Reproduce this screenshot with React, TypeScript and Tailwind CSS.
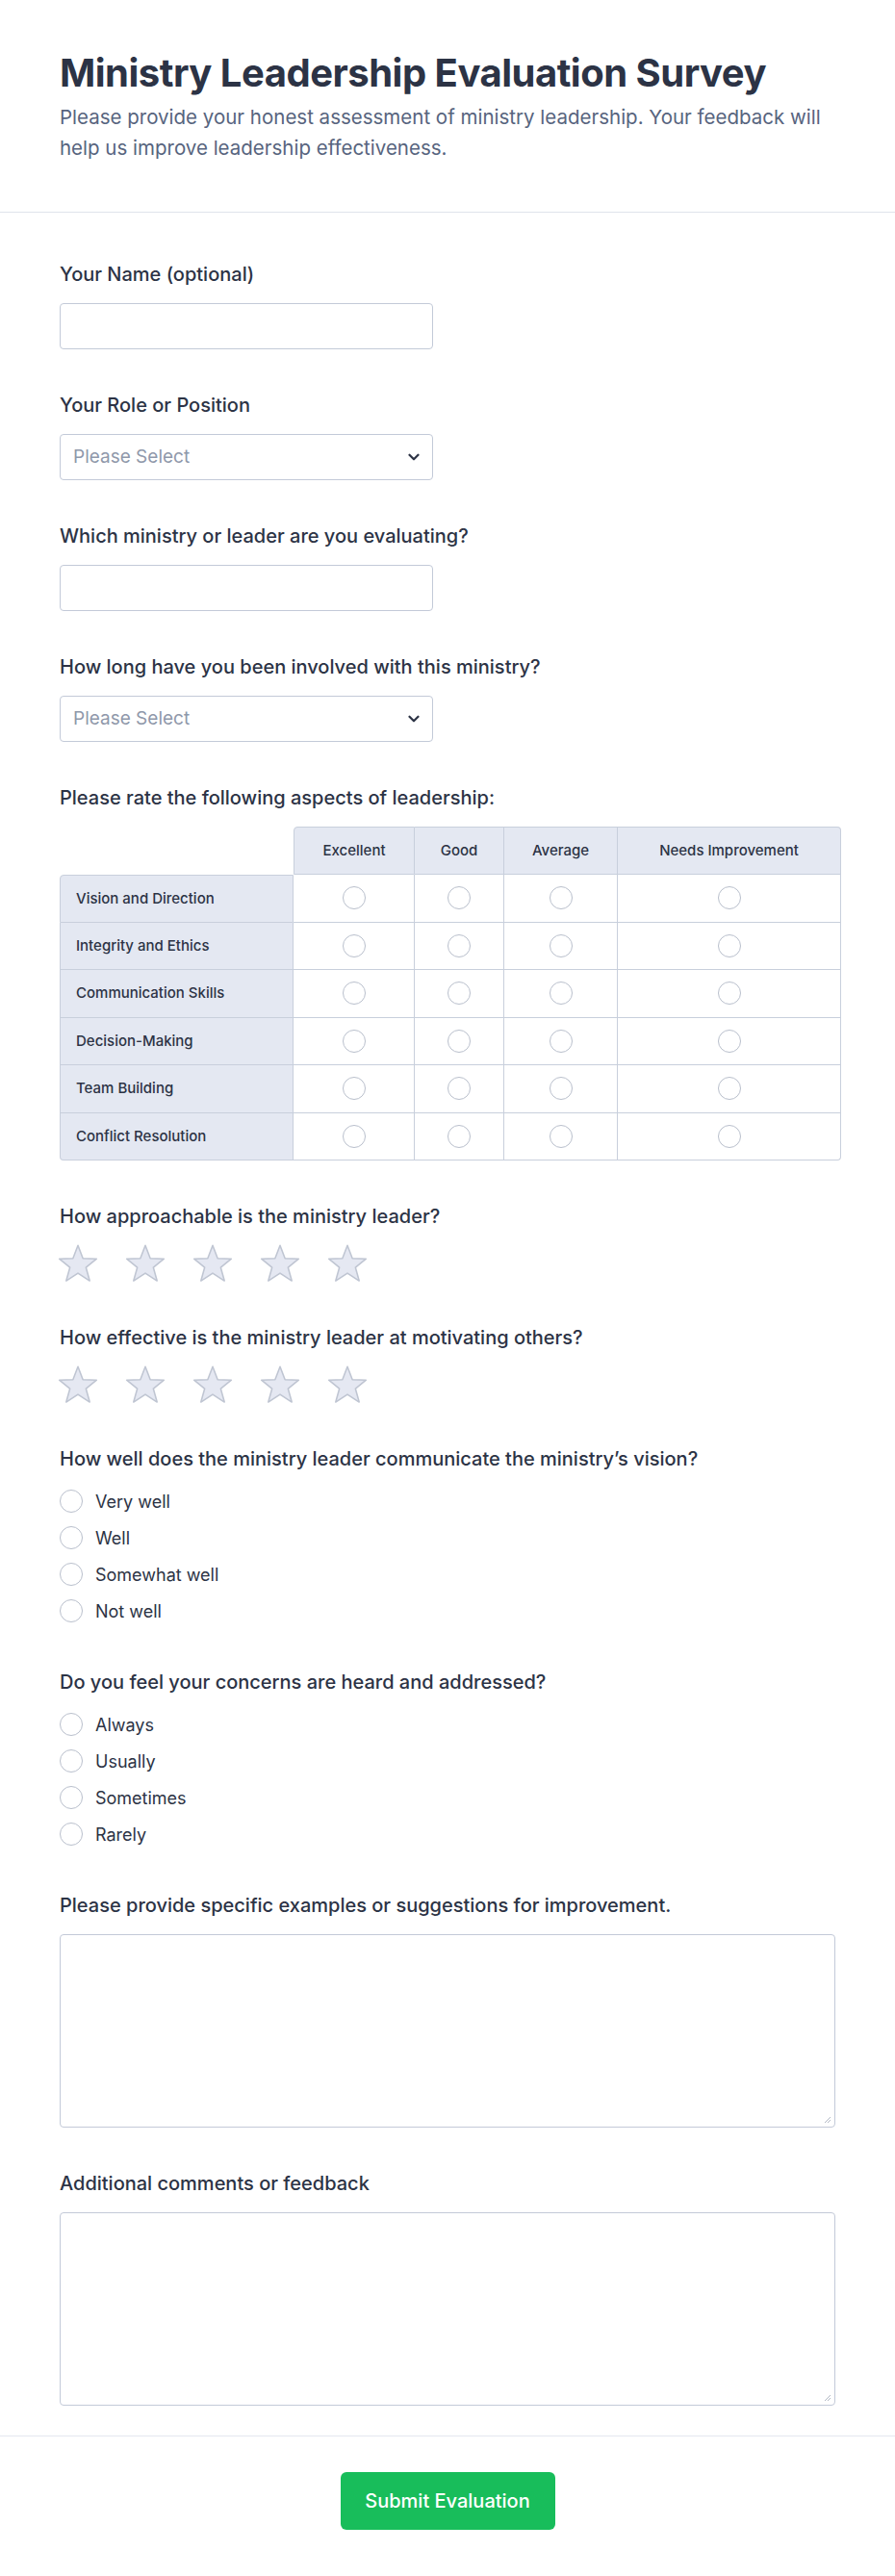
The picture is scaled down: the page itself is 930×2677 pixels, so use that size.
import React from 'react';

const ratingRows = [
  'Vision and Direction',
  'Integrity and Ethics',
  'Communication Skills',
  'Decision-Making',
  'Team Building',
  'Conflict Resolution',
];

const ratingCols = ['Excellent', 'Good', 'Average', 'Needs Improvement'];

function Label({ children }: { children: React.ReactNode }) {
  return <label className="block text-[20px] leading-[24px] font-medium text-[#2c3345] mb-[18px]">{children}</label>;
}

function Radio() {
  return <span className="block w-6 h-6 rounded-full border border-[#b9bfcc] bg-white shrink-0" />;
}

function Chevron() {
  return (
    <svg width="12" height="8" viewBox="0 0 12 8" fill="none">
      <path d="M1.5 1.75l4.5 4.5 4.5-4.5" stroke="#2c3345" strokeWidth="2.2" strokeLinecap="round" strokeLinejoin="round" />
    </svg>
  );
}

function SelectBox() {
  return (
    <div className="w-[388px] h-[48px] rounded-[4px] border border-[#c3cad8] bg-white flex items-center justify-between pl-[13px] pr-[13px]">
      <span className="text-[19px] text-[#8f98aa]">Please Select</span>
      <Chevron />
    </div>
  );
}

function TextInput() {
  return <div className="w-[388px] h-[48px] rounded-[4px] border border-[#c3cad8] bg-white" />;
}

function Star() {
  return (
    <svg width="44" height="42" viewBox="0 0 40 38" fill="none" className="-my-[2px]">
      <polygon
        points="20,2 24.7,14.2 37.6,14.6 27.6,22.8 31.1,35.4 20,28.2 8.9,35.4 12.4,22.8 2.4,14.6 15.3,14.2"
        fill="#e5e8f2"
        stroke="#bfc5d2"
        strokeWidth="1.4"
        strokeLinejoin="round"
      />
    </svg>
  );
}

function Stars() {
  return (
    <div className="flex gap-[26px] -ml-[3px]">
      {[0, 1, 2, 3, 4].map((i) => (
        <Star key={i} />
      ))}
    </div>
  );
}

function RadioList({ options }: { options: string[] }) {
  return (
    <div className="flex flex-col gap-[10px]">
      {options.map((o) => (
        <div key={o} className="flex items-center h-[28px] gap-[13px]">
          <Radio />
          <span className="text-[18px] text-[#2c3345]">{o}</span>
        </div>
      ))}
    </div>
  );
}

function TextArea() {
  return (
    <div className="relative w-full h-[201px] rounded-[4px] border border-[#c3cad8] bg-white">
      {/* resize grip */}
      <svg className="absolute right-[3px] bottom-[3px]" width="9" height="9" viewBox="0 0 9 9">
        <path d="M8 2L2 8M8 5L5 8" stroke="#b4bac6" strokeWidth="1" />
      </svg>
    </div>
  );
}

function RatingTable() {
  const cellBorder = 'border-[#c8cfdc]';
  return (
    <div className="grid grid-cols-[243px_126px_93px_118px_232px] text-[15px] font-medium text-[#2c3345]">
      <div className="h-[50px]" />
      {ratingCols.map((c, i) => (
        <div
          key={c}
          className={`h-[50px] flex items-center justify-center bg-[#e4e8f2] border-t border-b border-r ${cellBorder} ${
            i === 0 ? 'border-l rounded-tl-[4px]' : ''
          } ${i === ratingCols.length - 1 ? 'rounded-tr-[4px]' : ''}`}
        >
          {c}
        </div>
      ))}
      {ratingRows.map((r, ri) => (
        <React.Fragment key={r}>
          <div
            className={`h-[49.5px] flex items-center pl-4 bg-[#e4e8f2] border-l border-b border-r ${cellBorder} ${
              ri === 0 ? 'border-t rounded-tl-[4px]' : ''
            } ${ri === ratingRows.length - 1 ? 'rounded-bl-[4px]' : ''}`}
          >
            {r}
          </div>
          {ratingCols.map((c, ci) => (
            <div
              key={c}
              className={`h-[49.5px] flex items-center justify-center bg-white border-b border-r ${cellBorder} ${
                ri === ratingRows.length - 1 && ci === ratingCols.length - 1 ? 'rounded-br-[4px]' : ''
              }`}
            >
              <Radio />
            </div>
          ))}
        </React.Fragment>
      ))}
    </div>
  );
}

export default function App() {
  return (
    <div className="min-h-screen bg-white font-['Inter',sans-serif] text-[#2c3345]">
      <header className="px-[62px] pt-[52px] pb-[50px] border-b border-[#dfe3ec]">
        <h1 className="text-[40px] leading-[48px] font-bold tracking-[-0.5px] text-[#2c3345]">
          Ministry Leadership Evaluation Survey
        </h1>
        <p className="mt-[6px] max-w-[806px] text-[20.5px] leading-[32px] text-[#57647e]">
          Please provide your honest assessment of ministry leadership. Your feedback will help us improve leadership
          effectiveness.
        </p>
      </header>

      <main className="px-[62px] pt-[52px] pb-[31px] flex flex-col gap-[46px] border-b border-[#e4e7ef]">
        <div>
          <Label>Your Name (optional)</Label>
          <TextInput />
        </div>
        <div>
          <Label>Your Role or Position</Label>
          <SelectBox />
        </div>
        <div>
          <Label>Which ministry or leader are you evaluating?</Label>
          <TextInput />
        </div>
        <div>
          <Label>How long have you been involved with this ministry?</Label>
          <SelectBox />
        </div>
        <div>
          <Label>Please rate the following aspects of leadership:</Label>
          <RatingTable />
        </div>
        <div>
          <Label>How approachable is the ministry leader?</Label>
          <Stars />
        </div>
        <div>
          <Label>How effective is the ministry leader at motivating others?</Label>
          <Stars />
        </div>
        <div>
          <Label>How well does the ministry leader communicate the ministry’s vision?</Label>
          <RadioList options={['Very well', 'Well', 'Somewhat well', 'Not well']} />
        </div>
        <div className="mt-[2px]">
          <Label>Do you feel your concerns are heard and addressed?</Label>
          <RadioList options={['Always', 'Usually', 'Sometimes', 'Rarely']} />
        </div>
        <div className="mt-[2px]">
          <Label>Please provide specific examples or suggestions for improvement.</Label>
          <TextArea />
        </div>
        <div>
          <Label>Additional comments or feedback</Label>
          <TextArea />
        </div>
      </main>

      <footer className="flex justify-center pt-[37px] pb-[46px]">
        <button className="w-[223px] h-[60px] rounded-[6px] bg-[#18bd5b] text-white text-[20px] font-medium">
          Submit Evaluation
        </button>
      </footer>
    </div>
  );
}
